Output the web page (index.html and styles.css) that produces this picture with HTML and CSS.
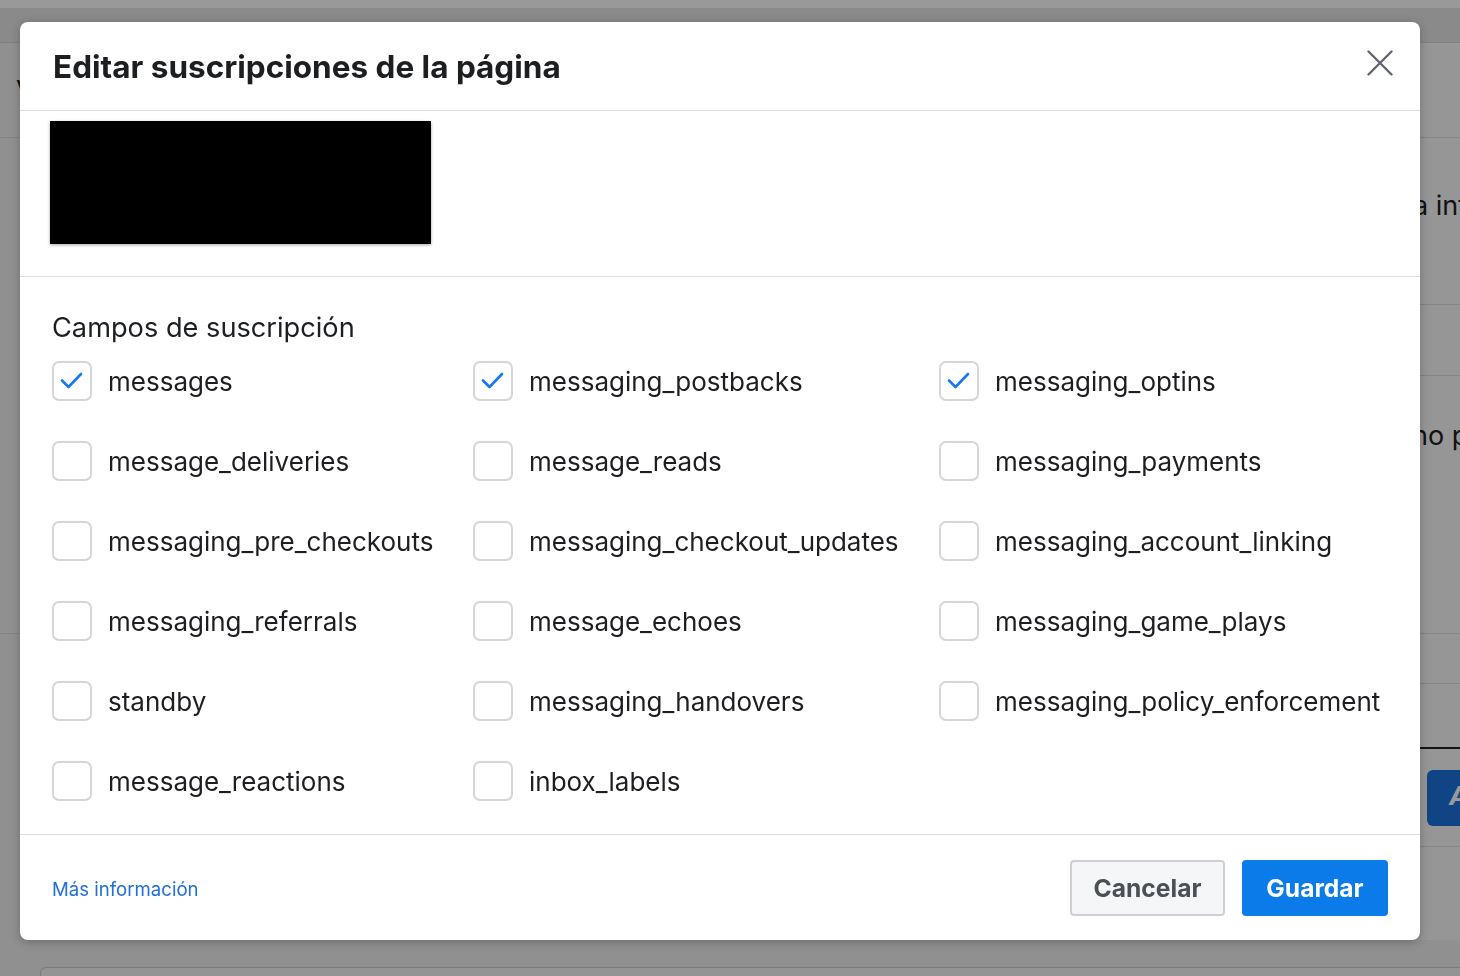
FILE: index.html
```html
<!DOCTYPE html>
<html lang="es">
<head>
<meta charset="utf-8">
<title>Editar suscripciones de la página</title>
<link rel="stylesheet" href="styles.css">
</head>
<body>
<div class="page">
  <div class="topbar"></div>
  <div class="navbar"></div>
  <div class="content">
    <div class="main-col">
      <div class="row r1"><span class="bg-text">v</span></div>
      <div class="row r2"></div>
      <div class="row r3"></div>
    </div>
    <div class="side-col">
      <div class="row s1"></div>
      <div class="row s2"><span class="bg-text">a int</span></div>
      <div class="row s3"></div>
      <div class="row s4"><span class="bg-text">no p</span></div>
      <div class="row s5"></div>
      <div class="row s6"></div>
      <div class="row s7"><span class="bg-btn">A</span></div>
      <div class="row s8"></div>
    </div>
  </div>
  <div class="bottom-card"></div>
</div>

<div class="overlay"></div>

<div class="modal" role="dialog">
  <div class="modal-header">
    <h1 class="modal-title">Editar suscripciones de la página</h1>
    <button class="close-btn" aria-label="Cerrar">
      <svg width="26" height="26" viewBox="0 0 26 26"><path d="M1.5 1.5 L24.5 24.5 M24.5 1.5 L1.5 24.5" stroke="#606770" stroke-width="2.4" stroke-linecap="round" fill="none"/></svg>
    </button>
  </div>
  <div class="page-section">
    <div class="page-redacted"></div>
  </div>
  <div class="fields-section">
    <div class="fields-title">Campos de suscripción</div>
    <div class="fields-grid">
      <label class="field"><span class="cb checked"><svg width="40" height="40" viewBox="0 0 40 40"><path d="M10 19.5 L16.5 26 L29 13" stroke="#1877f2" stroke-width="2.6" fill="none" stroke-linecap="round" stroke-linejoin="round"/></svg></span><span class="lbl">messages</span></label>
      <label class="field"><span class="cb checked"><svg width="40" height="40" viewBox="0 0 40 40"><path d="M10 19.5 L16.5 26 L29 13" stroke="#1877f2" stroke-width="2.6" fill="none" stroke-linecap="round" stroke-linejoin="round"/></svg></span><span class="lbl">messaging_postbacks</span></label>
      <label class="field"><span class="cb checked"><svg width="40" height="40" viewBox="0 0 40 40"><path d="M10 19.5 L16.5 26 L29 13" stroke="#1877f2" stroke-width="2.6" fill="none" stroke-linecap="round" stroke-linejoin="round"/></svg></span><span class="lbl">messaging_optins</span></label>

      <label class="field"><span class="cb"></span><span class="lbl">message_deliveries</span></label>
      <label class="field"><span class="cb"></span><span class="lbl">message_reads</span></label>
      <label class="field"><span class="cb"></span><span class="lbl">messaging_payments</span></label>

      <label class="field"><span class="cb"></span><span class="lbl">messaging_pre_checkouts</span></label>
      <label class="field"><span class="cb"></span><span class="lbl">messaging_checkout_updates</span></label>
      <label class="field"><span class="cb"></span><span class="lbl">messaging_account_linking</span></label>

      <label class="field"><span class="cb"></span><span class="lbl">messaging_referrals</span></label>
      <label class="field"><span class="cb"></span><span class="lbl">message_echoes</span></label>
      <label class="field"><span class="cb"></span><span class="lbl">messaging_game_plays</span></label>

      <label class="field"><span class="cb"></span><span class="lbl">standby</span></label>
      <label class="field"><span class="cb"></span><span class="lbl">messaging_handovers</span></label>
      <label class="field"><span class="cb"></span><span class="lbl">messaging_policy_enforcement</span></label>

      <label class="field"><span class="cb"></span><span class="lbl">message_reactions</span></label>
      <label class="field"><span class="cb"></span><span class="lbl">inbox_labels</span></label>
    </div>
  </div>
  <div class="modal-footer">
    <a class="more-link" href="#">Más información</a>
    <div class="actions">
      <button class="btn btn-cancel">Cancelar</button>
      <button class="btn btn-save">Guardar</button>
    </div>
  </div>
</div>
</body>
</html>
```

FILE: styles.css
```css
* { box-sizing: border-box; }
html, body { margin: 0; padding: 0; }
body {
  width: 1460px;
  height: 976px;
  overflow: hidden;
  font-family: Inter, "Noto Sans", "Liberation Sans", sans-serif;
  background: #f0f0f0;
  position: relative;
}

/* ---------- background page ---------- */
.page { width: 1460px; height: 976px; display: flex; flex-direction: column; overflow: hidden; }
.topbar { height: 8px; background: #ffffff; flex: none; }
.navbar { height: 35px; background: #e6e6e6; border-bottom: 1px solid #d6d6d6; flex: none; }
.content { display: flex; align-items: flex-start; flex: none; }
.main-col { flex: 1; background: #f0f0f0; }
.side-col { width: 420px; background: #fbfbfb; overflow: hidden; }
.row { position: relative; border-bottom: 1px solid #dcdcdc; }
.r1 { height: 95px; }
.r2 { height: 496px; }
.r3 { height: 300px; border-bottom: none; }
.s1 { height: 95px; }
.s2 { height: 167px; }
.s3 { height: 71px; }
.s4 { height: 258px; }
.s5 { height: 50px; }
.s6 { height: 65px; border-bottom: 2px solid #222; }
.s7 { height: 98px; padding: 21px 0 0 387px; }
.s8 { height: 93px; border-bottom: none; }
.bg-text {
  position: absolute;
  font-size: 27px;
  color: #1c1e21;
  white-space: nowrap;
}
.r1 .bg-text { left: 16px; top: 26px; }
.s2 .bg-text { left: 373px; top: 51px; }
.s4 .bg-text { left: 372px; top: 43px; }
.bg-btn {
  display: block;
  width: 33px;
  height: 56px;
  border-radius: 6px 0 0 6px;
  background: #1c72de;
  color: #fff;
  font-weight: 700;
  font-style: italic;
  font-size: 26px;
  padding: 10px 0 0 22px;
  overflow: hidden;
}
.bottom-card {
  position: absolute;
  left: 40px;
  right: 0;
  top: 967px;
  height: 9px;
  border: 1px solid #cfcfcf;
  border-right: none;
  border-bottom: none;
  border-radius: 6px 0 0 0;
  background: #f7f7f7;
}

.overlay {
  position: fixed;
  inset: 0;
  background: rgba(0, 0, 0, 0.4);
}

/* ---------- modal ---------- */
.modal {
  position: absolute;
  left: 20px;
  top: 22px;
  width: 1400px;
  height: 918px;
  background: #ffffff;
  border-radius: 8px;
  box-shadow: 0 2px 10px rgba(0, 0, 0, 0.25);
  display: flex;
  flex-direction: column;
  color: #1c1e21;
  overflow: hidden;
}
.modal-header {
  flex: none;
  height: 89px;
  border-bottom: 1px solid #dadde1;
  display: flex;
  align-items: center;
  justify-content: space-between;
  padding: 0 27px 0 33px;
}
.modal-title {
  margin: 0;
  font-size: 31.5px;
  font-weight: 700;
  color: #1c1e21;
}
.close-btn {
  background: none;
  border: none;
  padding: 0;
  width: 26px;
  height: 26px;
  cursor: pointer;
  position: relative;
  top: -3px;
}
.close-btn svg { display: block; }

.page-section {
  flex: none;
  height: 166px;
  border-bottom: 1px solid #dadde1;
  padding: 10px 0 0 30px;
}
.page-redacted {
  width: 381px;
  height: 123px;
  background: #000;
  box-shadow: 0 1px 3px rgba(0, 0, 0, 0.35);
}

.fields-section {
  flex: 1;
  min-height: 0;
  border-bottom: 1px solid #dadde1;
  padding: 33px 0 0 32px;
}
.fields-title {
  font-size: 27.2px;
  line-height: 36px;
  color: #1c1e21;
  margin-bottom: 15px;
}
.fields-grid {
  display: grid;
  grid-template-columns: 421px 466px auto;
  grid-auto-rows: 40px;
  row-gap: 40px;
}
.field {
  display: flex;
  align-items: flex-start;
  gap: 16px;
  height: 40px;
  cursor: pointer;
}
.cb {
  width: 40px;
  height: 40px;
  flex: none;
  border: 2px solid #d3d6db;
  border-radius: 7px;
  background: #fff;
  display: flex;
  align-items: center;
  justify-content: center;
}
.cb svg { display: block; margin: -2px; }
.lbl {
  font-size: 26px;
  line-height: 40px;
  color: #1c1e21;
  white-space: nowrap;
  position: relative;
  top: 1px;
}

.modal-footer {
  flex: none;
  height: 105px;
  display: flex;
  align-items: center;
  justify-content: space-between;
  padding: 0 32px 0 32px;
}
.more-link {
  font-size: 18.6px;
  color: #216fdb;
  text-decoration: none;
  position: relative;
  top: 1px;
}
.actions { display: flex; gap: 17px; }
.btn {
  height: 56px;
  border-radius: 4px;
  font-family: Inter, "Noto Sans", "Liberation Sans", sans-serif;
  font-size: 24.6px;
  font-weight: 700;
  padding: 0;
  cursor: pointer;
}
.btn-cancel {
  width: 155px;
  background: #f5f6f7;
  border: 2px solid #ccd0d5;
  color: #4b4f56;
}
.btn-save {
  width: 146px;
  background: #0a7be8;
  border: none;
  color: #fff;
}
```
